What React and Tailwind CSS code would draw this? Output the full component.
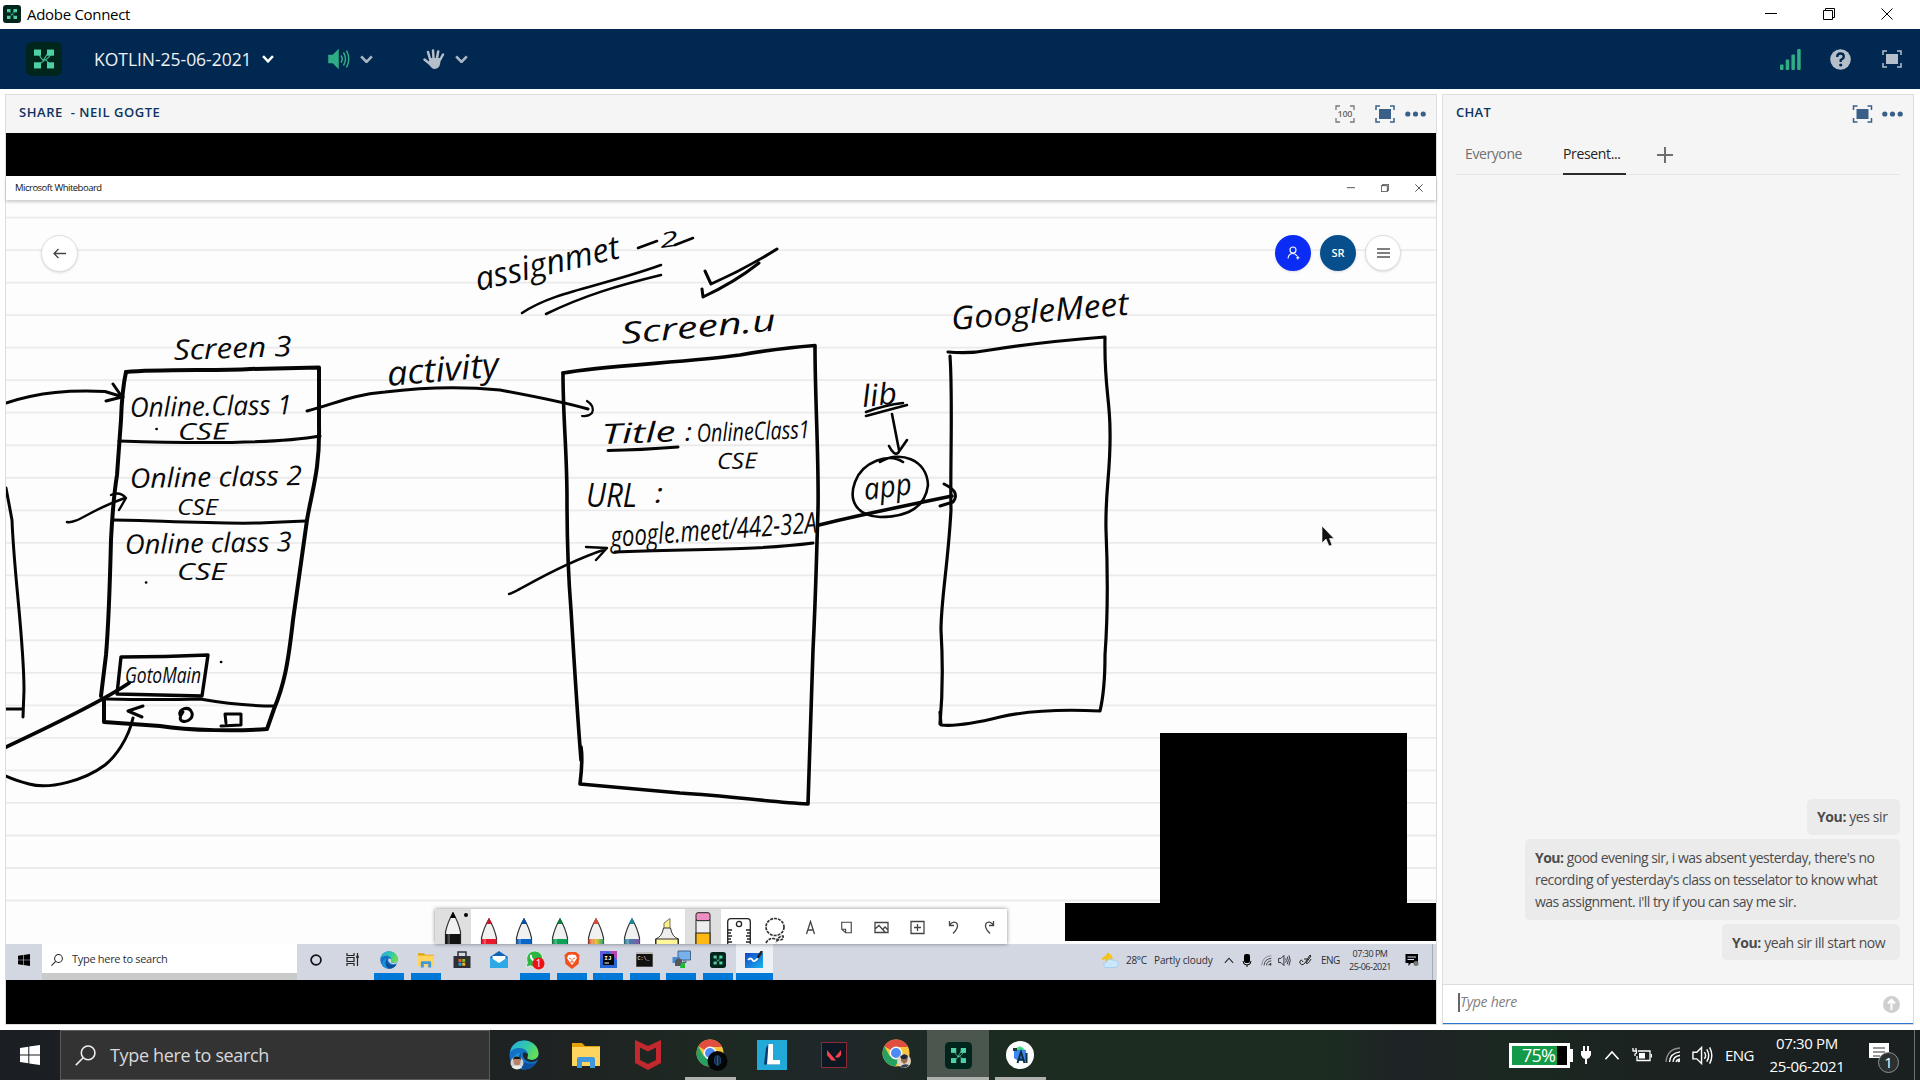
import React from "react";

const UI = "font-['Open_Sans','Noto_Sans',sans-serif]";

function ConnectLogo({ size = 36, fg = "#4fd0a5", bg = "#00251c", w }) {
  return (
    <svg width={w || size} height={size} viewBox="0 0 36 36" preserveAspectRatio="none">
      <rect width="36" height="36" rx="6" fill={bg} />
      <g fill={fg}>
        <rect x="8" y="8" width="7" height="6.500" />
        <rect x="21" y="8" width="7" height="6.500" />
        <rect x="8" y="21.500" width="7" height="6.500" />
        <rect x="21" y="21.500" width="7" height="6.500" />
      </g>
      <g stroke={fg} strokeWidth="1.100" fill="none" opacity="0.850">
        <path d="M13 12 Q14 17 18 20 Q23 17 25 13 M18 20 L11 25 M16 19 H20 L24 24 M17 20 L23 10" />
      </g>
    </svg>
  );
}

function Chevron({ color = "#aab5c2", w = 12, up = false, sw = 2.4 }) {
  return (
    <svg width={w} height={w * 0.66} viewBox="0 0 12 8" fill="none" stroke={color} strokeWidth={sw}>
      <path d={up ? "M1 7 L6 1.500 L11 7" : "M1 1.200 L6 6.500 L11 1.200"} />
    </svg>
  );
}

function Speaker({ color, size = 22, solid = false }) {
  return (
    <svg width={size} height={size} viewBox="0 0 22 22" fill="none" stroke={color} strokeWidth="1.500">
      <path d="M1 7.500 H5 L10 2.500 V19.500 L5 14.500 H1 Z" fill={solid ? color : "none"} />
      <path d="M13 7.500 Q15.500 11 13 14.500 M15.500 4.500 Q19.500 11 15.500 17.500 M18.500 2.500 Q23 11 18.500 19.500" />
    </svg>
  );
}

function FullIcon({ color, w = 20, h = 18 }) {
  return (
    <svg width={w} height={h} viewBox="0 0 20 18" fill="none" stroke={color} strokeWidth="1.500">
      <path d="M1 5 V1 H5 M15 1 H19 V5 M19 13 V17 H15 M5 17 H1 V13" />
      <rect x="4" y="4" width="12" height="10" fill={color} stroke="none" />
    </svg>
  );
}

function Dots() {
  return (
    <svg width="21" height="6" viewBox="0 0 21 6" fill="#3a6089">
      <circle cx="2.800" cy="3" r="2.600" />
      <circle cx="10.500" cy="3" r="2.600" />
      <circle cx="18.200" cy="3" r="2.600" />
    </svg>
  );
}

function WinControls({ s = 12, gap = "gap-[46px]" }) {
  return (
    <div className={"flex items-center " + gap}>
      <svg width={s} height={s} viewBox="0 0 12 12" stroke="#000"><path d="M0 5.500 H12" /></svg>
      <svg width={s} height={s} viewBox="0 0 12 12" stroke="#000" fill="none">
        <path d="M0.500 2.500 H9.500 V11.500 H0.500 Z M2.500 2.500 V0.500 H11.500 V9.500 H9.500" />
      </svg>
      <svg width={s} height={s} viewBox="0 0 12 12" stroke="#000"><path d="M0.500 0.500 L11.500 11.500 M11.500 0.500 L0.500 11.500" /></svg>
    </div>
  );
}

function SearchIcon({ size, color, sw = 1.5 }) {
  return (
    <svg width={size} height={size} viewBox="0 0 20 20" fill="none" stroke={color} strokeWidth={sw}>
      <circle cx="12.500" cy="7.500" r="6.500" />
      <path d="M7.800 12.200 L0.800 19.200" />
    </svg>
  );
}

function WindowsIcon({ size, color }) {
  return (
    <svg width={size} height={size} viewBox="0 0 20 20" fill={color}>
      <path d="M0 3 L8.300 1.800 V9.600 H0 Z M9.300 1.600 L20 0 V9.600 H9.300 Z M0 10.500 H8.300 V18.300 L0 17.100 Z M9.300 10.500 H20 V20 L9.300 18.500 Z" />
    </svg>
  );
}

function EdgeIcon({ size, avatar }) {
  return (
    <svg width={size} height={size} viewBox="0 0 30 30">
      <defs>
        <linearGradient id="edgeTop" x1="0" y1="0" x2="1" y2="0.500">
          <stop offset="0" stopColor="#28a9e8" /><stop offset="0.600" stopColor="#31c9a8" /><stop offset="1" stopColor="#66dd55" />
        </linearGradient>
      </defs>
      <circle cx="15" cy="15" r="14.500" fill="#1272c6" />
      <path d="M1 13 C2 4 9 0.500 15 0.500 C24 0.500 30 7 29.500 14 C29 19 24 21 19 19 C17 18 19 17 19 14.500 C19 11 15 8 11 8 C6 8 2 10 1 13 Z" fill="url(#edgeTop)" />
      <path d="M11 13 C9 20 13 27 23 27 C19 30 8 31 4 23 C3 18 6 13 11 13 Z" fill="#1593dd" />
      <path d="M12 13 C10 20 16 26 27 23 C24 28 19 30 14 29 C8 25 8 17 12 13 Z" fill="#0d4f9c" />
      <path d="M15 12 C12 15 15 21 22 22 C26 22 28 20 29 19 L29.800 15 C28 20 23 21 18.500 19 C18 17 19 16 19 14 Z" fill={avatar ? "#202423" : "#d4d9e3"} />
      {avatar && (
        <g>
          <circle cx="8" cy="23" r="6.500" fill="#ccd2d4" />
          <ellipse cx="8" cy="21.500" rx="3.500" ry="4" fill="#b98268" />
          <path d="M4 20.500 Q4 16 8.500 16.500 Q12.500 17 12 20.500 L11 19 H5 Z" fill="#191414" />
          <path d="M2.500 27 Q8 24 13 27 Q8 31 2.500 27" fill="#f0ece8" />
        </g>
      )}
    </svg>
  );
}

function FolderIcon({ size }) {
  return (
    <svg width={size} height={size} viewBox="0 0 28 28">
      <path d="M0 2 H10 L13 5 H28 V10 H0 Z" fill="#e3a10c" />
      <rect x="0" y="6" width="28" height="19" rx="0.500" fill="#ffd45f" />
      <path d="M5 27 V18 Q5 16 7 16 H21 Q23 16 23 18 V27 H18 V21 H10 V27 Z" fill="#3f97dd" />
    </svg>
  );
}

function ChromeIcon({ dark }) {
  return (
    <svg className="ml-[3px]" width="32" height="32" viewBox="0 0 32 32">
      <circle cx="14" cy="14" r="13.500" fill="#f8c63d" />
      <path d="M14 14 L2.300 7.200 A13.500 13.500 0 0 1 26 8 H14 Z" fill="#df4e3f" />
      <path d="M14 14 L8 17.500 L2.300 7.200 A13.500 13.500 0 0 0 13 27.500 L20 17 Z" fill="#25a163" />
      <circle cx="14" cy="14" r="6.400" fill="#fff" />
      <circle cx="14" cy="14" r="5" fill="#4b8bf4" />
      {dark ? (
        <g>
          <circle cx="21.500" cy="22" r="10" fill="#050607" />
          <path d="M18.500 19 Q21.500 14 24.500 19 V24 L21.500 27 L18.500 24 Z" fill="#122c4a" stroke="#1b426b" />
          <path d="M21.500 17 V26" stroke="#2c5e8b" />
        </g>
      ) : (
        <g>
          <circle cx="22" cy="22" r="7" fill="#e0d3bf" />
          <path d="M19 18 Q22 13 26 18 L25 23 L22 25 L19 22 Z" fill="#936b4f" />
          <path d="M18 18 Q22 13 26 17 L24 20 H20 Z" fill="#202a3a" />
          <path d="M18 28 Q21 24 27 26 Q24 30 18 28" fill="#2f3d55" />
        </g>
      )}
    </svg>
  );
}

function Ink({ d, w = 3 }) {
  return <path d={d} strokeWidth={w} />;
}

const NOTES = [
  ["Screen 3", 174, 360, 118, 28, -2],
  ["Online.Class 1", 130, 417, 162, 27, -1],
  ["CSE", 178, 440, 50, 23, -1],
  ["Online class 2", 130, 488, 172, 27, -1],
  ["CSE", 177, 515, 41, 22, 0],
  ["Online class 3", 125, 554, 167, 27, -1],
  ["CSE", 177, 580, 49, 23, 0],
  ["GotoMain", 125, 683, 76, 21, 0],
  ["assignmet", 478, 291, 147, 33, -13],
  ["2", 661, 248, 18, 21, -8],
  ["Screen.u", 622, 344, 155, 30, -5],
  ["activity", 388, 386, 112, 34, -5],
  ["Title", 602, 444, 74, 28, -2],
  [":", 685, 441, 7, 25, 0],
  ["OnlineClass1", 697, 442, 113, 25, -2],
  ["CSE", 717, 469, 40, 22, -1],
  ["URL", 586, 507, 51, 32, 0],
  [":", 655, 503, 8, 27, 0],
  ["google.meet/442-32A", 611, 547, 207, 29, -4],
  ["lib", 863, 407, 35, 30, -6],
  ["app", 865, 500, 48, 30, -7],
  ["GoogleMeet", 952, 330, 178, 32, -5],
];

const RULES = Array.from({ length: 22 }, (_, i) => 217.6 + i * 32.52);

function Board() {
  return (
    <svg className="block" width="1430" height="744" viewBox="6 200 1430 744">
      <rect x="6" y="200" width="1430" height="744" fill="#fdfdfd" />
      {RULES.map((y) => <path key={y} d={`M6 ${y} H1436`} stroke="#ebebec" strokeWidth="1.800" />)}
      <g fill="none" stroke="#050505" strokeLinecap="round" strokeLinejoin="round">
        <Ink w={4} d="M126 372 C160 369 220 371 250 369 L319 367.500 V425 C320 470 312 490 307 520 L293 620 C288 665 284 685 274 709 L267 729 C240 731 190 731 160 726 L104 722 V700" />
        <Ink w={4} d="M126 372 Q122 390 121 420 Q118 460 117 475 Q113 500 111 540 Q109 620 106 655 L101 696" />
        <Ink d="M119 441 C180 443 270 445 320 436" />
        <Ink d="M113 520 C150 520 200 524 260 523 Q280 522 306 521" />
        <Ink w={3.4} d="M121 657 Q165 657 208 655 L202 696 Q160 695 117 694 Z" />
        <Ink d="M106 699 Q160 700 200 699 Q240 706 275 706" />
        <Ink d="M143 706 L128 711 L142 717 M180 715 C178 709 188 706 191 711 C195 717 188 723 182 721 Q178 719 183 712 M225 714 L226 723 M226 714 L241 714 L241 725 L221 726" />
        <Ink d="M6 403 C40 392 70 390 105 391.500 L123 397 M113 384 L122 397 L106 401" />
        <Ink d="M6 488 L12 520 C14 575 24 640 24 690 L23 717 M6 709 H22" />
        <Ink w={2.4} d="M67 522 C77 524 90 510 125 498 M111 495 Q120 491 126 498 L119 510" />
        <Ink w={3.8} d="M129 683 Q100 703 6 747" />
        <Ink d="M133 718 C128 740 115 757 105 765 C85 780 50 790 29 784 Q15 780 6 776" />
        <Ink w={2.6} d="M146 582.500 h0.200 M221 662 h0.200 M156.500 429 h0.200" />

        <Ink w={2.6} d="M522 313 C555 291 600 287 661 265 M546 314 C585 295 620 285 661 275" />
        <Ink w={2.6} d="M638 248 L657 241 M675 245 L693 238" />
        <Ink w={3} d="M705 271 L711 284 Q745 269 777 249 M702 289 L703 297 Q735 282 759 263" />
        <Ink d="M307 411 C335 404 350 395 385 392 C425 387 460 386 500 390 Q560 401 588 409" />
        <Ink w={2.2} d="M587 401 Q595 406 592 413 Q588 417 582 416" />
        <Ink w={3.6} d="M563 373 C600 366 690 362 740 355 Q780 348 815 345.500 C815 400 819 460 818 510 C816 570 816 590 813 650 L808 804 C770 802 730 796 680 793 L580 784 Q583 760 581 747" />
        <Ink w={3.6} d="M563 373 C563 420 567 450 567 500 Q567 560 571 610 C574 660 577 710 581 760" />
        <Ink d="M608 450.500 Q640 450 678 447 M615 552 C700 549 760 550 813 543" />
        <Ink w={2.4} d="M509 594 C515 594 550 568 606 549 M586 547 L607 548 L596 560" />

        <Ink w={2.6} d="M866 412 Q885 405 903 403 M866 416 Q888 410 907 405 M892 414 L899 450 M889 446 Q894 456 898 453 L907 440" />
        <Ink w={2.6} d="M903 462 C889 452 862 462 855 482 C848 501 857 516 880 517 C906 517 925 509 928 485 C927 459 899 450 880 462" />
        <Ink w={3.6} d="M819 525 Q850 517 952 496" />
        <Ink d="M944 484 Q961 492 953 502 L940 506" />
        <Ink w={3.2} d="M948 352 Q970 354 990 350 Q1040 342 1105 337 C1104 385 1110 400 1110 430 C1111 470 1105 490 1106 530 Q1109 600 1105 655 Q1105 690 1100 711 Q1040 708 1000 717 Q960 727 941 725 L940 712" />
        <Ink w={3.2} d="M950 356 C953 400 950 470 951 510 C948 565 941 600 941 630 Q944 680 940 724" />
      </g>
      <g fill="#0a0a0a" fontFamily="'Open Sans','Noto Sans',sans-serif" fontStyle="italic" fontWeight="500">
        {NOTES.map(([t, x, y, len, size, rot], i) => (
          <text key={i} x={x} y={y} fontSize={size} textLength={len} lengthAdjust="spacingAndGlyphs" transform={`rotate(${rot} ${x} ${y})`}>{t}</text>
        ))}
      </g>
      <path d="M1322 526 V543 L1326 539 L1329 546 L1332 545 L1329.500 538.500 H1334 Z" fill="#111" stroke="#fff" strokeWidth="0.600" />
      <path d="M1160 733 H1407 V903 H1436 V941 H1065 V903 H1160 Z" fill="#000" />
    </svg>
  );
}

function Pen({ tip, body, tall }) {
  return (
    <svg width="18" height={tall ? 32 : 26} viewBox={tall ? "0 0 18 32" : "0 0 18 26"}>
      <path d="M1.500 32 V20 Q4 9 9 1 Q14 9 16.500 20 V32 Z" fill="#f1f1f1" stroke="#333" strokeWidth="1.200" />
      <path d="M6.800 5.500 L9 0.500 L11.200 5.500 Z" fill={tip} stroke={tip} />
      <rect x="1.500" y={tall ? 22 : 21} width="15" height="12" fill={body} />
      <rect x="3.500" y={tall ? 22 : 21} width="2.500" height="12" fill="#fff" opacity="0.250" />
    </svg>
  );
}

const PENS = [["#c9152b", "#e8192c"], ["#0a4fae", "#0a66c8"], ["#06813f", "#0ba257"], ["#d84a36", "url(#rainbow)"], ["#15899a", "url(#galaxy)"]];
const g = { fill: "none", stroke: "#444", strokeWidth: 1.3, width: 15, height: 15, viewBox: "0 0 15 15" };

function PenTray() {
  return (
    <div className="grid h-[35px] w-[572px] grid-cols-16 overflow-hidden bg-white shadow-[0_0_4px_rgba(0,0,0,0.45)]">
      <svg width="0" height="0" className="absolute">
        <defs>
          <linearGradient id="rainbow"><stop offset="0" stopColor="#e0412f" /><stop offset="0.500" stopColor="#eec639" /><stop offset="1" stopColor="#24a66c" /></linearGradient>
          <linearGradient id="galaxy"><stop offset="0" stopColor="#2b93a8" /><stop offset="1" stopColor="#8257a5" /></linearGradient>
        </defs>
      </svg>
      <div className="flex items-end justify-center bg-[#dfdfdf] pl-[6px]">
        <Pen tip="#000" body="#111" tall />
        <span className="mb-[27px] ml-[2px] size-[4px] rounded-full bg-black" />
      </div>
      {PENS.map(([t, b]) => <div key={t} className="flex items-end justify-center"><Pen tip={t} body={b} /></div>)}
      <div className="flex items-end justify-center">
        <svg width="24" height="26" viewBox="0 0 24 26">
          <path d="M9 10 V5 L15 0.500 V10" fill="#ffee83" stroke="#776" />
          <path d="M0.500 26 V21 Q7 19 8.500 10 H15.500 Q17 19 23.500 21 V26" fill="#eee" stroke="#333" />
          <rect x="1" y="21" width="22" height="6" fill="#fff79a" stroke="#333" />
        </svg>
      </div>
      <div className="flex items-end justify-center bg-[#dfdfdf]">
        <svg width="16" height="32" viewBox="0 0 16 32" stroke="#222">
          <rect x="1" y="8" width="14" height="26" fill="#eee" />
          <rect x="1" y="0.700" width="14" height="8" rx="2" fill="#ee8fc4" />
          <rect x="1" y="21" width="14" height="14" fill="#fdb913" />
        </svg>
      </div>
      <div className="flex items-end justify-center">
        <svg width="24" height="26" viewBox="0 0 24 26" fill="none" stroke="#222" strokeWidth="1.300">
          <rect x="0.700" y="0.700" width="22.600" height="32" rx="3" />
          <circle cx="12" cy="6" r="2.600" />
          <path d="M1 12 H5 M1 15 H4 M1 18 H5 M1 21 H4 M1 24 H5 M23 12 H19 M23 15 H20 M23 18 H19 M23 21 H20 M23 24 H19" />
        </svg>
      </div>
      <div className="flex items-end justify-center">
        <svg width="22" height="27" viewBox="0 0 22 27" fill="none" stroke="#333" strokeWidth="1.700" strokeDasharray="3 1">
          <ellipse cx="11" cy="10" rx="9" ry="8.500" />
          <path d="M2 26 Q5 20 12 22 Q20 25 19 19 Q14 19 12 26" />
        </svg>
      </div>
      <div className="flex items-center justify-center pt-[2px]"><svg {...g}><path d="M3.500 14 L7.500 1.500 L11.500 14 M4.800 10 H10.200" /></svg></div>
      <div className="flex items-center justify-center pt-[1px]"><svg {...g} width="13"><path d="M2 1.500 H13 V13.500 H6.500 L2 9.500 Z M2 9.500 H6.500 V13.500" /></svg></div>
      <div className="flex items-center justify-center pt-[1px]"><svg {...g}><path d="M1 2.500 H14 V12.500 H1 Z M1 9 L5 5.500 L11 12 M9 9 L11 7 L14 10" /></svg></div>
      <div className="flex items-center justify-center pt-[1px]"><svg {...g}><path d="M1 1.500 H14 V13.500 H1 Z M7.500 4 V11 M4 7.500 H11" /></svg></div>
      <div className="flex items-center justify-center pt-[1px]"><svg {...g}><path d="M3.500 1 V5.500 H8 M3.500 5 Q8 0 11 3.500 Q13 8 7 13.500" /></svg></div>
      <div className="flex items-center justify-center pt-[1px]"><svg {...g}><path d="M11.500 1 V5.500 H7 M11.500 5 Q7 0 4 3.500 Q2 8 8 13.500" /></svg></div>
    </div>
  );
}

const innerApps = [
  { k: "edge", on: 1, el: <EdgeIcon size={18} /> },
  { k: "files", on: 1, el: <FolderIcon size={16} /> },
  { k: "store", el: <svg width="18" height="18" viewBox="0 0 18 18"><path d="M0.500 5 H17.500 V17 H0.500 Z" fill="#303034" /><path d="M5 5 V1 H13 V5" fill="none" stroke="#303034" strokeWidth="1.500" /><path d="M5.500 8 h3 v3 h-3z" fill="#f15a2c" /><path d="M9.200 8 h3 v3 h-3z" fill="#7fb927" /><path d="M5.500 11.700 h3 v3 h-3z" fill="#1ba3e0" /><path d="M9.200 11.700 h3 v3 h-3z" fill="#f7b520" /></svg> },
  { k: "mail", el: <svg width="18" height="17" viewBox="0 0 18 17"><path d="M0 6 L9 0 L18 6 V17 H0 Z" fill="#1066b5" /><path d="M2.500 5 H15.500 V12 H2.500 Z" fill="#fff" /><path d="M0 6 L9 12 L18 6 V17 H0 Z" fill="#2ea9e6" /></svg> },
  { k: "wa", on: 1, el: <svg width="20" height="20" viewBox="0 0 20 20"><path d="M1 17 L2.500 12.500 A8 8 0 1 1 5.500 15.800 Z" fill="#2cb742" stroke="#eaf7eb" strokeWidth="0.800" /><path d="M6 5 Q5 9 11 12" stroke="#fff" strokeWidth="2" fill="none" /><circle cx="13.500" cy="13.500" r="6" fill="#ef1111" /><text x="13.500" y="17.300" fontSize="10" fill="#fff" textAnchor="middle" fontFamily="'Open Sans',sans-serif">1</text></svg> },
  { k: "brave", on: 1, el: <svg width="16" height="18" viewBox="0 0 16 18"><path d="M4 1 H12 L15.500 4 L14.500 13 L8 18 L1.500 13 L0.500 4 Z" fill="#f3501f" /><path d="M4.500 4 L8 3.500 L11.500 4 L13 7 L10.500 11 L8 14 L5.500 11 L3 7 Z" fill="#fff" /><path d="M5 7 L7 8 M11 7 L9 8 M8 8 V11 M6 11 H10" stroke="#f3501f" strokeWidth="0.900" /></svg> },
  { k: "ij", on: 1, el: <svg width="17" height="17" viewBox="0 0 17 17"><path d="M0 0 H9 L17 8 V17 H0 Z" fill="#2468d8" /><path d="M9 0 H17 V9 Z" fill="#b746b5" /><path d="M0 0 L8 0 L0 8 Z" fill="#5d5be0" /><rect x="3" y="3" width="11" height="11" fill="#050505" /><text x="4.300" y="9" fontSize="6" fontWeight="700" fill="#fff" fontFamily="'Liberation Mono',monospace">IJ</text><path d="M4.500 12 H9" stroke="#fff" /></svg> },
  { k: "cmd", on: 1, el: <svg width="17" height="15" viewBox="0 0 17 15"><rect width="17" height="15" fill="#111" stroke="#888" /><path d="M0 0 H17 V2 H0Z" fill="#bbb" /><text x="1.500" y="8" fontSize="5" fill="#fff" fontFamily="'Liberation Mono',monospace">C:\_</text></svg> },
  { k: "remote", on: 1, el: <svg width="19" height="19" viewBox="0 0 19 19"><path d="M6 1 H18.500 V10 H6 Z" fill="#78b1ef" stroke="#446488" /><path d="M11 11 H14 V12.500 H9.500" stroke="#536779" fill="none" /><path d="M0.500 7 H8 V13 H0.500Z" fill="#488bd7" /><path d="M3 11 Q6 6 10 10 V16 H3 Z" fill="#55585b" /><path d="M9 13 H13 V18 H8Z" fill="#1dba35" /></svg> },
  { k: "connect", on: 1, el: <ConnectLogo size={16} /> },
  { k: "board", on: 1, sel: 1, el: <svg width="19" height="17" viewBox="0 0 19 17"><defs><linearGradient id="wb" x2="1" y2="1"><stop stopColor="#1242c8" /><stop offset="1" stopColor="#19b6ee" /></linearGradient></defs><rect y="2" width="18" height="15" fill="url(#wb)" /><path d="M3 9 Q5.500 6 7.500 9 Q9 12 13 7" stroke="#fff" strokeWidth="1.800" fill="none" /><path d="M12.500 7 L17 0" stroke="#222" strokeWidth="2.500" /></svg> },
];

function Wifi({ color, size }) {
  return (
    <svg width={size} height={size} viewBox="0 0 16 16" fill="none" stroke={color} strokeWidth="1.300">
      <path d="M1 15 Q2 2 15 1" opacity="0.500" />
      <path d="M4.500 15 Q5 6 15 4.800 M8 15 Q8.500 9 15 8.500 M11 15 Q11.500 12.500 15 12" />
      <circle cx="13.800" cy="14" r="1.300" fill={color} stroke="none" />
    </svg>
  );
}

function InnerTaskbar() {
  return (
    <div className={"flex h-[36px] w-[1430px] bg-[#d3d7e2] text-[#2c2f36] " + UI}>
      <div className="flex w-[36px] items-center justify-center pb-[5px]"><WindowsIcon size={12} color="#000" /></div>
      <div className="flex h-[36px] w-[255px] flex-col bg-[#c9cacc]">
        <div className="flex h-[29px] items-center bg-white pl-[9px] pt-[2px]">
          <SearchIcon size={12} color="#222" sw={1.7} />
          <span className="ml-[9px] text-[11px] tracking-[-0.3px]">Type here to search</span>
        </div>
      </div>
      <div className="flex w-[37px] items-center justify-center pb-[5px]"><svg width="12" height="12" viewBox="0 0 12 12"><circle cx="6" cy="6" r="4.900" fill="none" stroke="#111" strokeWidth="1.700" /></svg></div>
      <div className="flex w-[37px] items-center justify-center pb-[5px]"><svg width="13" height="13" viewBox="0 0 13 13" fill="none" stroke="#222" strokeWidth="1.200"><path d="M1 0 V2.500 H8 V0 M1 4.500 H8 V8.500 H1 Z M1 13 V10.500 H8 V13 M11.500 0 V3 M11.500 5 V13" /><circle cx="11.500" cy="4" r="0.800" fill="#222" /></svg></div>
      {innerApps.map((a) => (
        <div key={a.k} className={"flex w-[36.5px] flex-col items-center justify-between " + (a.sel ? "bg-[#edf0f5]" : "")}>
          <div className="flex h-[29px] items-center justify-center pt-[2px]">{a.el}</div>
          {a.on && <div className={"h-[7px] bg-[#0078d7] " + (a.sel ? "w-full" : "w-[30px]")} />}
        </div>
      ))}
      <div className="flex flex-1 items-start justify-end text-[10px]">
        <div className="flex h-[32px] items-center">
          <svg width="17" height="15" viewBox="0 0 17 15"><circle cx="6.500" cy="5" r="4" fill="#f6c51d" /><path d="M0 6 L4 4 M6 0 V3" stroke="#f4bd15" strokeWidth="2" /><path d="M3 14.500 Q0 10 4.500 9 Q6 4.500 10.500 7 Q16 7 16.500 11 Q16.500 14.500 13 14.500 Z" fill="#c9e6fa" stroke="#8fc4ea" strokeWidth="0.600" /></svg>
          <span className="ml-[7px] w-[28px] whitespace-nowrap tracking-[-0.3px]">28°C</span>
          <span className="w-[70px] whitespace-nowrap tracking-[-0.1px]">Partly cloudy</span>
          <Chevron color="#222" w={10} up sw={1.4} />
          <svg className="ml-[8px]" width="10" height="13" viewBox="0 0 10 13"><rect x="2" y="0" width="6" height="9" rx="2" fill="#000" /><path d="M1 7 Q1 11 5 11 Q9 11 9 7 M5 11 V13" fill="none" stroke="#000" /></svg>
          <span className="ml-[9px]"><Wifi color="#333" size={11} /></span>
          <span className="ml-[6px]"><Speaker color="#222" size={13} /></span>
          <svg className="ml-[8px]" width="13" height="12" viewBox="0 0 13 12" fill="none" stroke="#222" strokeWidth="1"><path d="M4 8 Q2 4 0.800 8 Q2 13 6 9 L11 1 L12 2 L7 9 M5 5 H9 M7 9 Q9 11 12 5" /></svg>
          <span className="ml-[9px] w-[27px] tracking-[-0.5px]">ENG</span>
          <div className="flex w-[44px] flex-col items-center whitespace-nowrap text-[9px] leading-[13px] tracking-[-0.5px]"><div>07:30 PM</div><div>25-06-2021</div></div>
          <svg className="ml-[13px] mr-[13px]" width="14" height="12" viewBox="0 0 14 12"><path d="M0.500 0 H13 V9 H6 L3.500 12 V9 H0.500 Z" fill="#000" /><path d="M2.500 3 H11 M2.500 5.500 H9" stroke="#dde" /><circle cx="11" cy="9.500" r="2.500" fill="#777" /></svg>
        </div>
        <div className="h-[36px] w-[4px] border-l border-[#a5abb8]" />
      </div>
    </div>
  );
}

function SharePod() {
  return (
    <div className="flex h-[931px] w-[1432px] flex-col border border-[#dcdcdc] bg-[#f5f5f5]">
      <div className={"flex h-[38px] items-center pl-[13px] pr-[10px] " + UI}>
        <span className="whitespace-pre pb-[2px] text-[13px] font-semibold tracking-[0.55px] text-[#0f3361]">SHARE  - NEIL GOGTE</span>
        <div className="ml-auto flex items-center">
          <svg width="20" height="18" viewBox="0 0 20 18" fill="none" stroke="#777" strokeWidth="1.300"><path d="M1 5 V1 H5 M15 1 H19 V5 M19 13 V17 H15 M5 17 H1 V13" /><text x="2.500" y="12.300" fontSize="9" fontWeight="600" fill="#666" stroke="none" textLength="15" fontFamily="'Open Sans',sans-serif">100</text></svg>
          <span className="ml-[20px] mr-[10px]"><FullIcon color="#3a6089" /></span>
          <Dots />
        </div>
      </div>
      <div className="h-[43px] bg-black" />
      <div className={"z-10 flex h-[24px] items-center bg-white pl-[9px] pr-[13px] shadow-[0_2px_3px_rgba(0,0,0,0.2)] " + UI}>
        <span className="text-[9.500px] tracking-[-0.5px] text-[#111]">Microsoft Whiteboard</span>
        <div className="ml-auto"><WinControls s={8} gap="gap-[26px]" /></div>
      </div>
      <div className="relative h-[744px]">
        <Board />
        <div className="absolute left-[35px] top-[35px] flex size-[37px] items-center justify-center rounded-full border border-[#ddd] bg-white shadow">
          <svg width="13" height="11" viewBox="0 0 13 11" fill="none" stroke="#444" strokeWidth="1.300"><path d="M13 5.500 H1 M5.500 1 L1 5.500 L5.500 10" /></svg>
        </div>
        <div className={"absolute left-[1269px] top-[35px] flex gap-[9px] " + UI}>
          <div className="flex size-[36px] items-center justify-center rounded-full bg-[#0b2cf5] shadow">
            <svg width="13" height="14" viewBox="0 0 13 14" fill="none" stroke="#fff" strokeWidth="1.100"><circle cx="6" cy="4" r="3" /><path d="M1 12.500 Q1.500 7.500 6 7.500 Q8.500 7.500 10 10 M10.800 10 V13.400 M9.100 11.700 H12.500" /></svg>
          </div>
          <div className="flex size-[36px] items-center justify-center rounded-full bg-[#064f8c] text-[11px] font-semibold text-white shadow">SR</div>
          <div className="flex size-[36px] items-center justify-center rounded-full border border-[#ddd] bg-white shadow">
            <svg width="13" height="10" viewBox="0 0 13 10" stroke="#555" strokeWidth="1.400"><path d="M0 1 H13 M0 5 H13 M0 9 H13" /></svg>
          </div>
        </div>
        <div className="absolute bottom-0 left-[429px]"><PenTray /></div>
      </div>
      <InnerTaskbar />
      <div className="h-[44px] bg-black" />
    </div>
  );
}

function Bubble({ children, w }) {
  return <div className={"whitespace-pre rounded-[5px] bg-[#ebebeb] px-[10px] text-[14px] leading-[22px] text-[#4b4b4b] " + w}><b className="font-bold">You:</b> {children}</div>;
}

function ChatPod() {
  return (
    <div className={"flex h-[931px] w-[472px] flex-col border border-[#dcdcdc] bg-[#f5f5f5] " + UI}>
      <div className="flex h-[38px] items-center pl-[13px] pr-[10px]">
        <span className="pb-[2px] text-[13px] font-semibold tracking-[0.3px] text-[#0f3361]">CHAT</span>
        <div className="ml-auto flex items-center gap-[9px]"><FullIcon color="#3a6089" w={21} /><Dots /></div>
      </div>
      <div className="mx-[13px] mt-[2px] flex h-[40px] border-b border-[#e6e6e6] text-[14px]">
        <span className="ml-[9px] w-[98px] pt-[8px] tracking-[-0.4px] text-[#707070]">Everyone</span>
        <span className="h-[40px] w-[63px] border-b-2 border-[#2b2b2b] pt-[8px] tracking-[-0.35px] text-[#222]">Present...</span>
        <svg className="ml-[31px] mt-[12px]" width="16" height="16" viewBox="0 0 16 16" stroke="#6e6e6e" strokeWidth="2"><path d="M8 0 V16 M0 8 H16" /></svg>
      </div>
      <div className="flex flex-1 flex-col items-end justify-end gap-[4px] pb-[24px] pr-[13px]">
        <Bubble w="w-[93px] py-[7px] tracking-[-0.4px]">yes sir</Bubble>
        <Bubble w="w-[375px] pb-[7px] pt-[8px] tracking-[-0.52px]">{"good evening sir, i was absent yesterday, there's no\nrecording of yesterday's class on tesselator to know what\nwas assignment. i'll try if you can say me sir."}</Bubble>
        <Bubble w="w-[178px] pb-[6px] pt-[8px] tracking-[-0.42px]">yeah sir ill start now</Bubble>
      </div>
      <div className="flex h-[40px] items-center border-b border-t border-b-[#2c75d6] border-t-[#dcdcdc] bg-white pl-[15px] pr-[13px]">
        <span className="mb-[4px] h-[19px] border-l-2 border-[#666] text-[14px] italic leading-[17px] tracking-[-0.3px] text-[#808080]">Type here</span>
        <svg className="ml-auto" width="17" height="17" viewBox="0 0 17 17"><circle cx="8.500" cy="8.500" r="8.500" fill="#cfcfcf" /><path d="M8.500 14 V4 M5 7.500 L8.500 3.800 L12 7.500" stroke="#fff" strokeWidth="2" fill="none" /></svg>
      </div>
    </div>
  );
}

const outerApps = [
  { k: "edge", el: <EdgeIcon size={30} avatar /> },
  { k: "files", el: <FolderIcon size={28} /> },
  { k: "mcafee", el: <svg width="26" height="30" viewBox="0 0 26 30"><path d="M0 0 L13 6 L26 0 V23 L13 30 L0 23 Z M5 7.500 V20 L13 24 L21 20 V7.500 L13 11.500 Z" fill="#c2282d" fillRule="evenodd" /></svg> },
  { k: "c1", on: 1, el: <ChromeIcon dark /> },
  { k: "l", el: <svg width="30" height="30" viewBox="0 0 30 30"><rect width="30" height="30" fill="#22a9d8" /><path d="M9 8 L11.500 4 V20 L23 20 V24.500 H7 Z" fill="#083a6e" /><path d="M11.500 4 H16 V20 H23 V24.500 H10 Z" fill="#fff" /></svg> },
  { k: "val", el: <svg width="26" height="26" viewBox="0 0 26 26"><rect x="0.500" y="0.500" width="25" height="25" fill="#0e1822" stroke="#8d2a38" /><path d="M6 8 L15 18.500 H10.500 L6 13 Z M20 8 V13 L18 15.500 H13.800 Z" fill="#f7424f" /></svg> },
  { k: "c2", el: <ChromeIcon /> },
  { k: "connect", on: 1, sel: 1, el: <ConnectLogo size={27} /> },
  { k: "as", on: 1, el: <svg width="28" height="28" viewBox="0 0 28 28"><circle cx="14" cy="14" r="14" fill="#fff" /><path d="M8 9 H20 V20 H12 L8 17 Z" fill="#3f86f5" /><path d="M9 9 Q14 2 19 9 Z" fill="#3ddb85" /><path d="M7 7 H11 V10 H7Z" fill="#123e35" /><path d="M11.500 22 L15 11 L18.500 22 M12.500 18.500 H17.500 M20.500 12 V22" stroke="#0a3040" strokeWidth="2" fill="none" /></svg> },
];

function OuterTaskbar() {
  return (
    <div className={"flex h-[50px] w-[1920px] bg-[linear-gradient(90deg,#1b1f23_0%,#1f2222_28%,#1d2922_38%,#20272a_43%,#1c2c20_53%,#1c2c20_69%,#1e2325_73%,#1b2821_79%,#1b2120_88%,#1a1f20_100%)] text-white " + UI}>
      <div className="flex w-[60px] items-center justify-center"><WindowsIcon size={20} color="#fff" /></div>
      <div className="flex w-[430px] items-center border border-[#5a5a5a] bg-[#333] pl-[14px]">
        <SearchIcon size={21} color="#eee" />
        <span className="ml-[14px] pt-px text-[18px] tracking-[-0.35px] text-[#d8d8d8]">Type here to search</span>
      </div>
      <div className="ml-[3px] flex">
        {outerApps.map((a) => (
          <div key={a.k} className={"flex w-[62px] flex-col items-center " + (a.sel ? "bg-[#4a564e]" : "")}>
            <div className="flex h-[47px] items-center pt-[3px]">{a.el}</div>
            {a.on && <div className={"h-[3px] bg-[#aeb1ae] " + (a.sel ? "w-full" : "w-[51px]")} />}
          </div>
        ))}
      </div>
      <div className="ml-auto flex items-center">
        <div className="flex h-[25px] w-[61px] border-[3px] border-white bg-black">
          <div className="w-[45px] bg-[#129a48] pl-[10px] text-[18px] leading-[19px] tracking-[-0.8px]">75%</div>
        </div>
        <div className="h-[13px] w-[3px] bg-white" />
        <svg className="ml-[8px]" width="10" height="18" viewBox="0 0 10 18" fill="#fff"><path d="M2 0 H4 V5 H6 V0 H8 V5 H10 V9 Q9 12 6 13 V18 H4 V13 Q1 12 0 9 V5 H2 Z" /></svg>
        <span className="ml-[13px]"><Chevron color="#fff" w={16} up sw={1.2} /></span>
        <svg className="ml-[12px]" width="20" height="14" viewBox="0 0 20 14" fill="none" stroke="#fff" strokeWidth="1.300"><path d="M6 3 H18 V12.500 H5 V8 M19.500 6 V9.500" /><rect x="7" y="5" width="6" height="5.500" fill="#fff" stroke="none" /><path d="M1 0 V3 M4 0 V3 M0.500 3 H4.500 V5 L3 6 V8" /></svg>
        <span className="ml-[13px]"><Wifi color="#fff" size={16} /></span>
        <span className="ml-[11px]"><Speaker color="#fff" size={21} /></span>
        <span className="ml-[12px] w-[34px] text-[15px] tracking-[-0.6px]">ENG</span>
        <div className="w-[96px] text-center text-[15px] leading-[23px] tracking-[-0.35px]"><div>07:30 PM</div><div>25-06-2021</div></div>
        <svg className="ml-[14px] mr-[14px] mt-[8px]" width="31" height="32" viewBox="0 0 31 32">
          <path d="M0 0 H20 V15 H13 L10 20 V15 H0 Z" fill="#fff" /><path d="M4 5 H16 M4 9 H16 M4 13 H11" stroke="#333" strokeWidth="1.200" />
          <circle cx="19.500" cy="19.500" r="10" fill="#2b3030" stroke="#8e9290" /><text x="19.500" y="25" fontSize="15" fill="#fff" textAnchor="middle" fontFamily="'Open Sans',sans-serif">1</text>
        </svg>
        <div className="h-[50px] w-[6px] border-l border-[#6c706e]" />
      </div>
    </div>
  );
}

export default function App() {
  return (
    <div className="flex h-[1080px] w-[1920px] flex-col overflow-hidden bg-white">
      <header className={"flex h-[29px] items-center pl-[3px] pr-[27px] pb-[2px] " + UI}>
        <ConnectLogo size={18} />
        <span className="ml-[6px] pt-px text-[15px] tracking-[-0.3px] text-black">Adobe Connect</span>
        <div className="ml-auto"><WinControls /></div>
      </header>
      <nav className={"flex h-[60px] items-center bg-[#002850] pl-[26px] pr-[18px] " + UI}>
        <ConnectLogo size={34} w={36} />
        <span className="ml-[32px] w-[168px] whitespace-nowrap text-[17.500px] tracking-[-0.03px] text-[#eef1f4]">KOTLIN-25-06-2021</span>
        <Chevron color="#fff" w={12} />
        <span className="ml-[54px]"><Speaker color="#2fae85" solid /></span>
        <span className="ml-[10px]"><Chevron w={13} /></span>
        <svg className="ml-[50px]" width="22" height="21" viewBox="0 0 22 21" fill="none" stroke="#b4bfca" strokeWidth="2.500" strokeLinecap="round">
          <path d="M7 10 L5 3 M10.500 9 L10 1.500 M14 9 L15.200 2.500 M17 11 L20 5.500 M7 15 L1.500 10.500" />
          <path d="M6.500 9 H17.500 Q18 20 12 20 Q8 20 5.500 14 Z" fill="#b4bfca" stroke="none" />
        </svg>
        <span className="ml-[10px]"><Chevron w={13} /></span>
        <div className="ml-auto flex items-center">
          <svg width="21" height="21" viewBox="0 0 21 21" fill="#2fae85"><rect y="15.500" width="3.500" height="5.500" rx="1" /><rect x="5.700" y="10.500" width="3.500" height="10.500" rx="1" /><rect x="11.400" y="5.500" width="3.500" height="15.500" rx="1" /><rect x="17.200" width="3.500" height="21" rx="1" /></svg>
          <svg className="ml-[29px]" width="21" height="21" viewBox="0 0 21 21"><circle cx="10.500" cy="10.500" r="10.300" fill="#b4bfca" /><path d="M7.200 8 Q7.200 4.500 10.500 4.500 Q13.800 4.500 13.800 7.500 Q13.800 9.500 10.700 11 V13" fill="none" stroke="#002850" strokeWidth="2.300" /><circle cx="10.700" cy="16" r="1.600" fill="#002850" /></svg>
          <span className="ml-[31px]"><FullIcon color="#b4bfca" /></span>
        </div>
      </nav>
      <main className="flex h-[941px] gap-[5px] pl-[5px] pt-[5px]">
        <SharePod />
        <ChatPod />
      </main>
      <OuterTaskbar />
    </div>
  );
}
